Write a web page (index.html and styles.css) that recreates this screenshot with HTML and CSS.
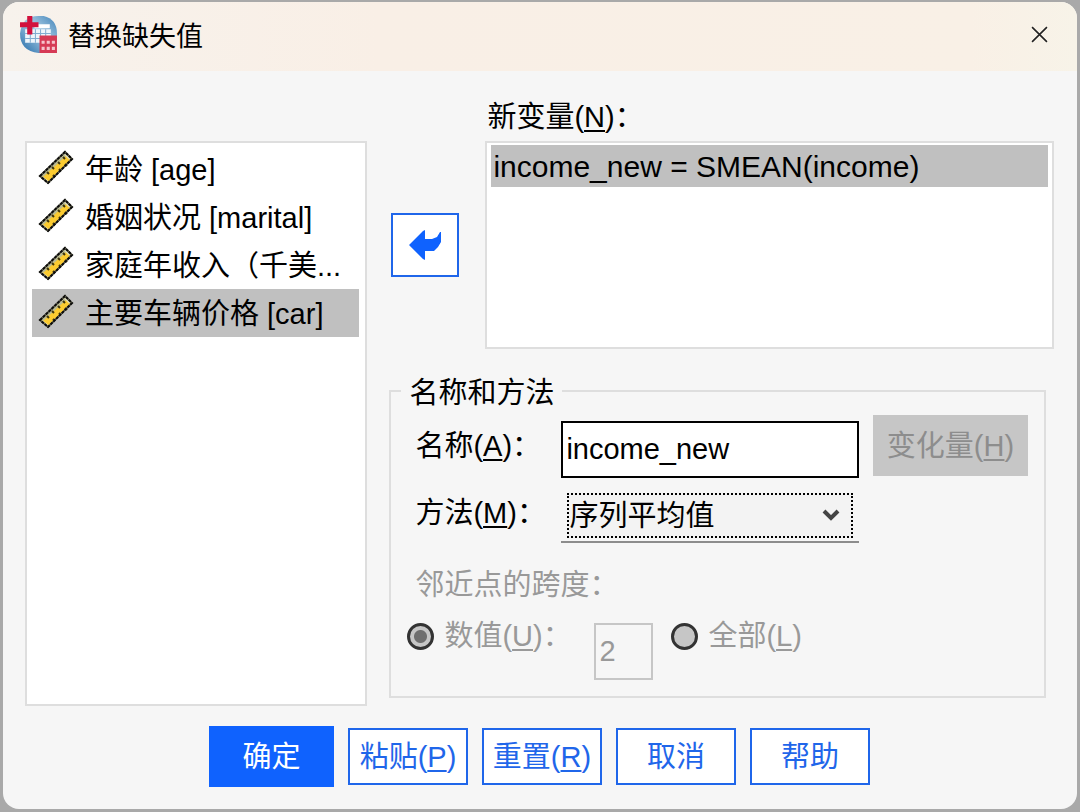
FILE: index.html
```html
<!DOCTYPE html>
<html lang="zh-CN">
<head>
  <meta charset="UTF-8">
  <meta name="viewport" content="width=device-width, initial-scale=1.0">
  <title>替换缺失值</title>
  <link rel="stylesheet" href="styles.css">
</head>
<body>
  <!-- Shared ruler icon -->
  <svg class="sprite" aria-hidden="true">
    <symbol id="ruler" viewBox="0 0 36 36">
      <path d="M2 26L27 2l7 7L10 33z" fill="#fbcb30"/>
      <path d="M4 26L28 4" stroke="#b9ba92" stroke-width="3"/>
      <path d="M12 30L32 10" stroke="#e2a91c" stroke-width="1"/>
      <path d="M9 22l2 2M14 17l2 2M20 12l2 2M25 7l2 2M15 25l2 2M21 19l2 2M27 14l2 2" stroke="#3d340c" stroke-width="2"/>
      <path d="M4 27l6 5M27 4l5 5" stroke="#deddbb" stroke-width="2"/>
      <path d="M2 26L27 2l7 7L10 33z" fill="none" stroke="#6b6b58" stroke-width="2"/>
      <path d="M2 26L27 2l7 7L10 33z" fill="none" stroke="#0c0c0c" stroke-width="2" stroke-dasharray="3 1"/>
    </symbol>
  </svg>

  <div class="window">
    <header class="title-bar">
      <svg class="app-icon" viewBox="0 0 38 38" aria-hidden="true">
        <defs>
          <linearGradient id="globe" x1="1" y1="0" x2="0" y2="1">
            <stop offset="0" stop-color="#3f82b8"/>
            <stop offset="0.45" stop-color="#a6cae3"/>
            <stop offset="1" stop-color="#1f69a8"/>
          </linearGradient>
        </defs>
        <path d="M19 1h5q13 3 13 17v19H19Q1 35 1 18 3 1 19 1z" fill="url(#globe)"/>
        <path d="M15 9h15v4H15z" fill="#fff"/>
        <path d="M6 14h25v13H6z" fill="#eef5fb"/>
        <path d="M6 18h25M6 23h25M11 14v13M16 14v13M21 14v13M26 14v13" stroke="#82add0" stroke-width="1"/>
        <path d="M8 1h5v6h6v5h-6v7H8v-7H1V7h7z" fill="#d2103c"/>
        <path d="M20 20h17v17H20z" fill="#d63a55"/>
        <path d="M22 25h3v3h-3zM27 25h3v3h-3zM32 25h3v3h-3zM22 31h3v3h-3zM27 31h3v3h-3zM32 31h3v3h-3z" fill="#f6c4cd"/>
      </svg>
      <h1>替换缺失值</h1>
      <button type="button" class="close-button" aria-label="关闭">
        <svg viewBox="0 0 16 16"><path d="M1 1l14 14M15 1L1 15"/></svg>
      </button>
    </header>

    <form class="dialog">
      <div class="columns">
        <!-- Source variables -->
        <ul class="list source-list" role="listbox" aria-label="变量">
          <li role="option"><svg><use href="#ruler"/></svg><span>年龄 [age]</span></li>
          <li role="option"><svg><use href="#ruler"/></svg><span>婚姻状况 [marital]</span></li>
          <li role="option"><svg><use href="#ruler"/></svg><span>家庭年收入（千美...</span></li>
          <li role="option" class="selected" aria-selected="true"><svg><use href="#ruler"/></svg><span>主要车辆价格 [car]</span></li>
        </ul>

        <div class="settings">
          <div class="targets">
            <button type="button" class="move-button" aria-label="移回">
              <svg viewBox="0 0 32 30"><path d="M0 15L14 1l2-1v9h7l5-2 3-5h1v10l-3 5-4 4h-9v9l-2-1z"/></svg>
            </button>
            <div class="new-variables">
              <div class="caption" id="newLabel">新变量(<u>N</u>)：</div>
              <ul class="list target-list" role="listbox" aria-labelledby="newLabel">
                <li role="option" class="selected" aria-selected="true">income_new = SMEAN(income)</li>
              </ul>
            </div>
          </div>

          <!-- Name and method -->
          <fieldset class="method-group">
            <legend>名称和方法</legend>
            <div class="fields">
              <label for="name">名称(<u>A</u>)：</label>
              <input type="text" id="name" class="text-box" value="income_new">
              <button type="button" class="change-button" disabled>变化量(<u>H</u>)</button>

              <label for="method">方法(<u>M</u>)：</label>
              <div class="drop-down">
                <select id="method">
                  <option>序列平均值</option>
                </select>
                <svg class="chevron" viewBox="0 0 18 12"><path d="M2 2l7 7 7-7"/></svg>
              </div>
            </div>

            <div class="span-title">邻近点的跨度：</div>
            <div class="span-row">
              <input type="radio" id="number" name="span" checked disabled>
              <label for="number" class="number-label">数值(<u>U</u>)：</label>
              <input type="text" class="span-box" value="2" aria-label="数值" disabled>
              <input type="radio" id="all" name="span" disabled>
              <label for="all">全部(<u>L</u>)</label>
            </div>
          </fieldset>
        </div>
      </div>

      <!-- Dialog buttons -->
      <div class="actions">
        <button type="submit" class="primary">确定</button>
        <button type="button">粘贴(<u>P</u>)</button>
        <button type="reset">重置(<u>R</u>)</button>
        <button type="button">取消</button>
        <button type="button">帮助</button>
      </div>
    </form>
  </div>
</body>
</html>
```

FILE: styles.css
```css
* {
  box-sizing: border-box;
}

body {
  margin: 0;
  padding: 2px 3px 3px;
  min-height: 100vh;
  display: flex;
  background: #a9a9a9;
  color: #000;
}

body,
button,
input,
select {
  font-family: "Liberation Sans", "Noto Sans CJK SC", sans-serif;
  font-size: 29px;
  font-weight: 400;
  line-height: 40px;
}

button,
input {
  padding: 0;
}

u {
  text-decoration-thickness: 2px;
  text-underline-offset: 3px;
  text-decoration-skip-ink: none;
}

.sprite {
  position: absolute;
  width: 0;
  height: 0;
}

/* Window */
.window {
  flex: 1;
  display: flex;
  flex-direction: column;
  background: #f6f6f6;
  border-radius: 16px;
  overflow: hidden;
}

.title-bar {
  display: flex;
  align-items: center;
  gap: 10px;
  height: 69px;
  padding: 0 28px 4px 16px;
  background: linear-gradient(90deg, #f7f2ec, #f9efe6 35%, #f9f0e6 90%, #f7f3e8);
}

.app-icon {
  width: 39px;
  height: 39px;
}

.title-bar h1 {
  flex: 1;
  margin: 0;
  padding-top: 4px;
  font-size: 27px;
  font-weight: 400;
}

.close-button {
  width: 20px;
  height: 20px;
  display: flex;
  align-items: center;
  justify-content: center;
  border: none;
  background: none;
}

.close-button svg {
  width: 17px;
  height: 17px;
  fill: none;
  stroke: #222;
  stroke-width: 1.5;
}

/* Dialog body */
.dialog {
  flex: 1;
  display: flex;
  flex-direction: column;
  gap: 20px;
  padding: 24px 23px 22px 22px;
}

.columns {
  flex: 1;
  display: grid;
  grid-template-columns: 34fr 66fr;
  gap: 22px;
}

.list {
  margin: 0;
  list-style: none;
  background: #fff;
  border: 2px solid #dedede;
}

.list .selected {
  background: #c0c0c0;
}

.source-list {
  margin-top: 46px;
  padding: 2px 6px 4px 5px;
}

.source-list li {
  display: flex;
  align-items: center;
  gap: 11px;
  height: 48px;
  padding-left: 6px;
  white-space: nowrap;
}

.source-list span {
  padding-top: 2px;
}

.source-list svg {
  flex: none;
  width: 36px;
  height: 36px;
  margin-bottom: 3px;
}

.settings {
  display: flex;
  flex-direction: column;
  gap: 20px;
}

.targets {
  display: flex;
  align-items: center;
  gap: 26px;
  padding-left: 2px;
}

.move-button {
  width: 68px;
  height: 64px;
  margin-top: 46px;
  display: flex;
  align-items: center;
  justify-content: center;
  background: #fff;
  border: 2px solid #1f66ea;
}

.move-button svg {
  width: 32px;
  height: 30px;
  fill: #0f62fe;
}

.new-variables {
  flex: 1;
}

.caption {
  height: 46px;
  padding: 2px 0 0 2px;
}

.target-list {
  height: 208px;
  padding: 2px 4px;
}

.target-list li {
  padding: 2px 0 0 2px;
  font-size: 30px;
}

/* Name and method */
.method-group {
  flex: 1;
  margin: 0 8px 8px 0;
  padding: 0 16px;
  border: 2px solid #dedede;
}

.method-group legend {
  padding: 4px 8px 0;
  margin-left: -6px;
}

.fields {
  display: grid;
  grid-template-columns: 146px 1fr 169px;
  align-items: center;
  row-gap: 5px;
  padding-left: 8px;
}

.text-box,
.drop-down {
  margin-top: 8px;
}

.text-box {
  width: 100%;
  height: 57px;
  padding: 0 3px;
  background: #fff;
  border: 2px solid #000;
}

.change-button {
  height: 61px;
  margin-left: 14px;
  background: #c6c6c6;
  border: none;
  color: #8d8d8d;
}

.drop-down {
  position: relative;
  padding: 2px 6px 3px;
  border-bottom: 2px solid #8d8d8d;
}

.drop-down select {
  appearance: none;
  display: block;
  width: 100%;
  height: 45px;
  padding: 0;
  background: #f3f3f3;
  border: 2px dotted #000;
  border-radius: 0;
  color: #000;
}

.chevron {
  position: absolute;
  right: 19px;
  top: 18px;
  width: 18px;
  height: 12px;
  fill: none;
  stroke: #444;
  stroke-width: 4;
  pointer-events: none;
}

.span-title {
  padding: 22px 8px 0;
  color: #999;
}

.span-row {
  display: flex;
  align-items: flex-start;
  gap: 10px;
  margin-top: 11px;
  color: #999;
}

.number-label {
  width: 140px;
}

.span-row input {
  margin: 7px 0 0;
}

.span-row input[type="radio"] {
  appearance: none;
  width: 27px;
  height: 27px;
  background: #c6c6c6;
  border: 3px solid #333;
  border-radius: 50%;
}

.span-row input[type="radio"]:checked {
  background: radial-gradient(circle, #6f6f6f 6px, #c6c6c6 7px);
}

.span-row .span-box {
  width: 59px;
  height: 57px;
  margin-right: 8px;
  padding: 0 3px;
  background: #f6f6f6;
  border: 2px solid #c6c6c6;
  color: #999;
}

/* Dialog buttons */
.actions {
  display: flex;
  align-items: center;
  justify-content: center;
  gap: 14px;
}

.actions button {
  width: 120px;
  height: 57px;
  background: #fff;
  border: 2px solid #1f66ea;
  color: #1f66ea;
  white-space: nowrap;
}

.actions .primary {
  width: 125px;
  height: 61px;
  background: #0f62fe;
  border-color: #0f62fe;
  color: #fff;
}
```
